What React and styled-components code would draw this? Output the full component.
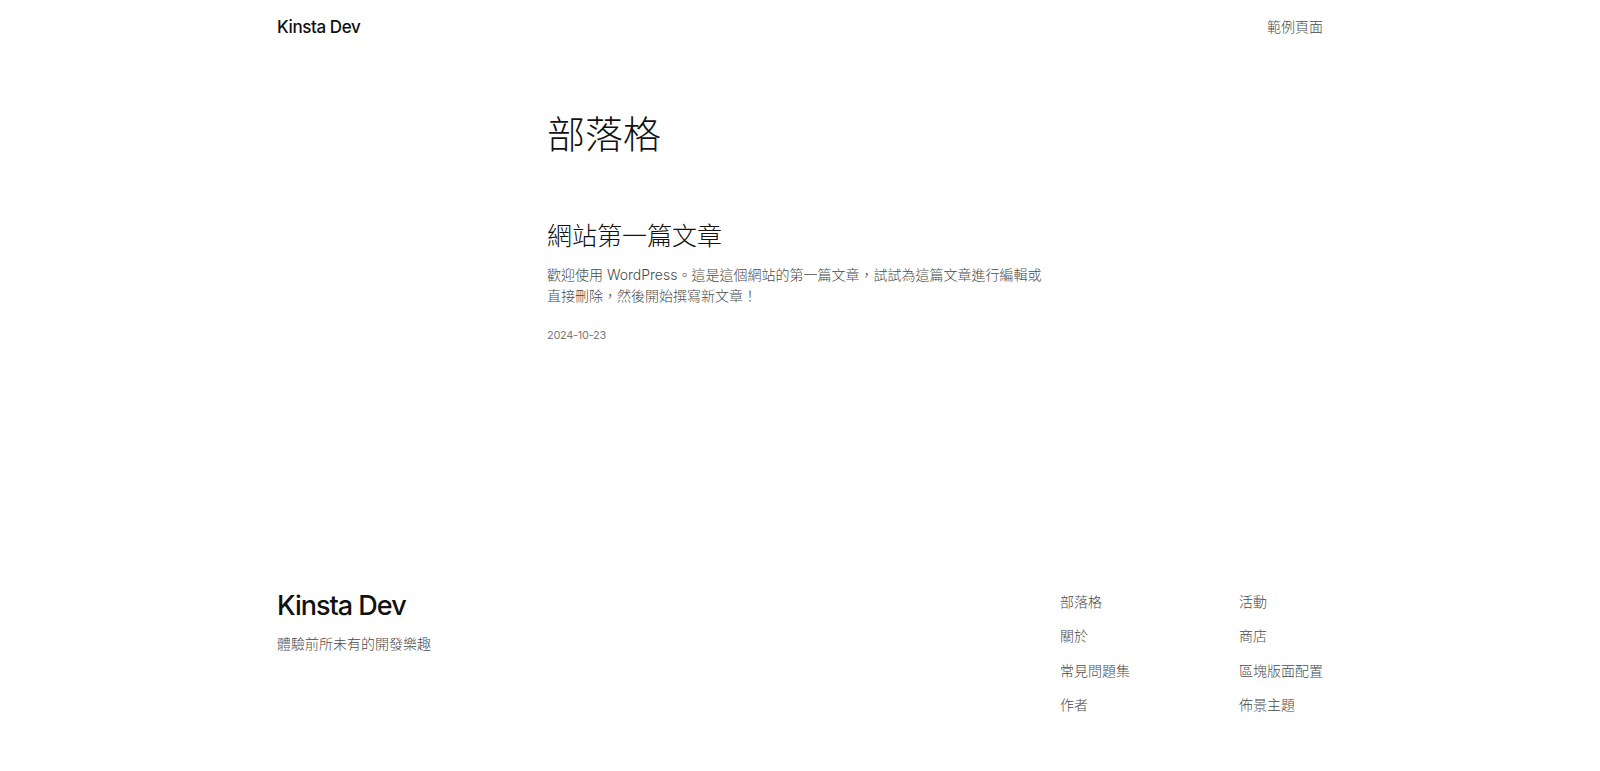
import React from 'react';
import styled, { createGlobalStyle } from 'styled-components';

const GlobalStyle = createGlobalStyle`
  html, body {
    margin: 0;
    padding: 0;
    background: #fff;
  }
  body {
    font-family: Inter, "Noto Sans CJK TC", sans-serif;
    color: #111;
    -webkit-font-smoothing: antialiased;
  }
`;

const cjk = `Inter, "Noto Sans CJK TC", sans-serif`;

const Page = styled.div`
  min-height: 771px;
  display: flex;
  flex-direction: column;
`;

const Wide = styled.div`
  width: 1046px;
  margin: 0 auto;
`;

const Header = styled(Wide)`
  height: 54px;
  display: flex;
  align-items: center;
  justify-content: space-between;
`;

const SiteTitle = styled.a`
  font-size: ${(p) => (p.$large ? '27px' : '17px')};
  font-weight: 500;
  letter-spacing: ${(p) => (p.$large ? '-1px' : '-0.4px')};
  line-height: 1.2;
  color: #111;
  text-decoration: none;
`;

const NavLink = styled.a`
  font-family: ${cjk};
  font-size: 14px;
  font-weight: 300;
  line-height: 20px;
  color: #4a4a4a;
  text-decoration: none;
`;

const Main = styled.main`
  width: 502px;
  margin: 57px auto 0;
  padding-right: 4px;
  flex: 1;
`;

const PageTitle = styled.h1`
  margin: 0;
  font-family: ${cjk};
  font-size: 38px;
  font-weight: 300;
  line-height: 46px;
  color: #111;
`;

const Post = styled.article`
  margin-top: 64px;
`;

const PostTitle = styled.h2`
  margin: 0;
  font-family: ${cjk};
  font-size: 25px;
  font-weight: 300;
  line-height: 31px;
  color: #111;
`;

const Excerpt = styled.p`
  margin: 12px 0 0;
  font-family: ${cjk};
  font-size: 14px;
  font-weight: 300;
  line-height: 21px;
  color: #4a4a4a;
`;

const PostDate = styled.time`
  display: block;
  margin-top: 21px;
  font-size: 11px;
  letter-spacing: -0.3px;
  line-height: 16px;
  color: #7a7a7a;
`;

const Footer = styled(Wide)`
  display: flex;
  justify-content: space-between;
  align-items: flex-start;
  padding-bottom: 56px;
`;

const Brand = styled.div`
  display: flex;
  flex-direction: column;
`;

const Tagline = styled.p`
  margin: 12px 0 0;
  font-family: ${cjk};
  font-size: 14px;
  font-weight: 300;
  line-height: 20px;
  color: #4a4a4a;
`;

const FooterNav = styled.nav`
  margin-top: 2px;
  display: grid;
  grid-template-columns: 179px auto;
  grid-auto-flow: column;
  grid-template-rows: repeat(4, 20px);
  row-gap: 14.5px;
`;

const footerLinks = ['部落格', '關於', '常見問題集', '作者', '活動', '商店', '區塊版面配置', '佈景主題'];

export default function App() {
  return (
    <Page>
      <GlobalStyle />
      <Header>
        <SiteTitle href="#">Kinsta Dev</SiteTitle>
        <NavLink href="#">範例頁面</NavLink>
      </Header>

      <Main>
        <PageTitle>部落格</PageTitle>
        <Post>
          <PostTitle>網站第一篇文章</PostTitle>
          <Excerpt>
            歡迎使用 WordPress。這是這個網站的第一篇文章，試試為這篇文章進行編輯或直接刪除，然後開始撰寫新文章！
          </Excerpt>
          <PostDate dateTime="2024-10-23">2024-10-23</PostDate>
        </Post>
      </Main>

      <Footer as="footer">
        <Brand>
          <SiteTitle href="#" $large>Kinsta Dev</SiteTitle>
          <Tagline>體驗前所未有的開發樂趣</Tagline>
        </Brand>
        <FooterNav>
          {footerLinks.map((label) => (
            <NavLink key={label} href="#">{label}</NavLink>
          ))}
        </FooterNav>
      </Footer>
    </Page>
  );
}
